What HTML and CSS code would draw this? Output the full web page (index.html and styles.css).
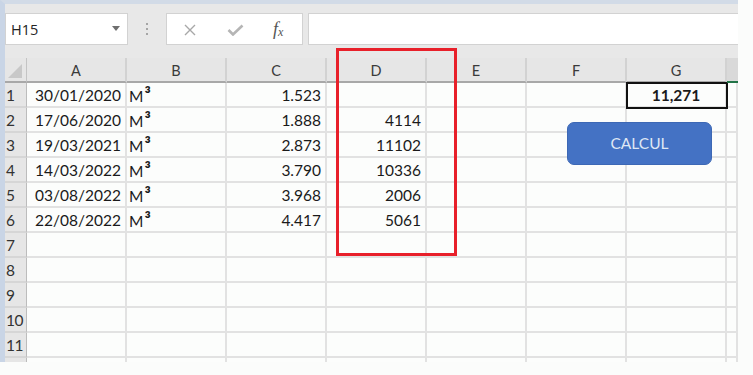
FILE: index.html
```html
<!DOCTYPE html>
<html>
<head>
<meta charset="utf-8">
<link rel="stylesheet" href="styles.css">
</head>
<body>
<div class="app">
  <div class="fbar">
    <div class="namebox"><span class="nb-text">H15</span><span class="caret"></span></div>
    <div class="dots"><span></span><span></span><span></span></div>
    <div class="fbtns">
      <svg class="ico-x" width="14" height="12" viewBox="0 0 14 12"><path d="M2 1 L12 11 M12 1 L2 11" stroke="#a8a8a8" stroke-width="1.4" fill="none"/></svg>
      <svg class="ico-ok" width="17" height="12" viewBox="0 0 17 12"><path d="M1.5 6 L6 10.5 L15.5 1.5" stroke="#b5b5b5" stroke-width="2.6" fill="none"/></svg>
      <span class="fx"><i>f</i><sub>x</sub></span>
    </div>
    <div class="finput"></div>
  </div>
  <div class="sheet">
    <div class="corner"><span class="tri"></span></div>
    <div class="ch">A</div><div class="ch">B</div><div class="ch">C</div><div class="ch">D</div><div class="ch">E</div><div class="ch">F</div><div class="ch">G</div><div class="ch ch-h"></div>

    <div class="rh">1</div><div class="c">30/01/2020</div><div class="c l">M<span class="cube">³</span></div><div class="c">1.523</div><div class="c"></div><div class="c"></div><div class="c"></div><div class="c ctr b">11,271</div><div class="c"></div>
    <div class="rh">2</div><div class="c">17/06/2020</div><div class="c l">M<span class="cube">³</span></div><div class="c">1.888</div><div class="c">4114</div><div class="c"></div><div class="c"></div><div class="c"></div><div class="c"></div>
    <div class="rh">3</div><div class="c">19/03/2021</div><div class="c l">M<span class="cube">³</span></div><div class="c">2.873</div><div class="c">11102</div><div class="c"></div><div class="c"></div><div class="c"></div><div class="c"></div>
    <div class="rh">4</div><div class="c">14/03/2022</div><div class="c l">M<span class="cube">³</span></div><div class="c">3.790</div><div class="c">10336</div><div class="c"></div><div class="c"></div><div class="c"></div><div class="c"></div>
    <div class="rh">5</div><div class="c">03/08/2022</div><div class="c l">M<span class="cube">³</span></div><div class="c">3.968</div><div class="c">2006</div><div class="c"></div><div class="c"></div><div class="c"></div><div class="c"></div>
    <div class="rh">6</div><div class="c">22/08/2022</div><div class="c l">M<span class="cube">³</span></div><div class="c">4.417</div><div class="c">5061</div><div class="c"></div><div class="c"></div><div class="c"></div><div class="c"></div>
    <div class="rh">7</div><div class="c"></div><div class="c"></div><div class="c"></div><div class="c"></div><div class="c"></div><div class="c"></div><div class="c"></div><div class="c"></div>
    <div class="rh">8</div><div class="c"></div><div class="c"></div><div class="c"></div><div class="c"></div><div class="c"></div><div class="c"></div><div class="c"></div><div class="c"></div>
    <div class="rh">9</div><div class="c"></div><div class="c"></div><div class="c"></div><div class="c"></div><div class="c"></div><div class="c"></div><div class="c"></div><div class="c"></div>
    <div class="rh">10</div><div class="c"></div><div class="c"></div><div class="c"></div><div class="c"></div><div class="c"></div><div class="c"></div><div class="c"></div><div class="c"></div>
    <div class="rh">11</div><div class="c"></div><div class="c"></div><div class="c"></div><div class="c"></div><div class="c"></div><div class="c"></div><div class="c"></div><div class="c"></div>
    <div class="rh t"></div><div class="c t"></div><div class="c t"></div><div class="c t"></div><div class="c t"></div><div class="c t"></div><div class="c t"></div><div class="c t"></div><div class="c t"></div>

    <div class="sel-box"></div>
    <div class="sel-green"></div>
    <div class="red-box"></div>
    <div class="btn">CALCUL</div>
  </div>
</div>
</body>
</html>
```

FILE: styles.css
```css
* { box-sizing: border-box; }
html, body { margin: 0; padding: 0; }
body {
  background: #fbfcfb;
  width: 753px;
  height: 375px;
  overflow: hidden;
  font-family: Lato, "Liberation Sans", sans-serif;
}
.app {
  width: 738px;
  border-left: 5px solid #c9d5e6;
  border-top: 4px solid #d2dbe7;
}
.fbar {
  height: 54px;
  background: #e8e8e8;
  display: flex;
  align-items: flex-start;
  padding-top: 9px;
}
.namebox {
  width: 123px;
  height: 32px;
  background: #fff;
  border: 1px solid #d2d2d2;
  display: flex;
  align-items: center;
  padding-left: 5px;
  position: relative;
}
.nb-text {
  font-family: "Open Sans", sans-serif;
  font-size: 14.5px;
  color: #222;
}
.caret {
  position: absolute;
  left: 106px;
  top: 12px;
  width: 0; height: 0;
  border-left: 4px solid transparent;
  border-right: 4px solid transparent;
  border-top: 5px solid #6f6f6f;
}
.dots {
  width: 38px;
  height: 32px;
  display: flex;
  flex-direction: column;
  align-items: center;
  justify-content: center;
  gap: 3px;
}
.dots span { width: 2px; height: 2px; background: #a5a5a5; }
.fbtns {
  width: 137px;
  height: 32px;
  background: #fff;
  border: 1px solid #d2d2d2;
  display: flex;
  align-items: center;
  padding-left: 16px;
}
.ico-x { margin-right: 30px; margin-top: 2px; }
.ico-ok { margin-right: 29px; margin-top: 2px; }
.fx {
  font-family: "Liberation Serif", serif;
  font-size: 18px;
  color: #555;
  font-style: italic;
}
.fx sub { font-size: 12px; vertical-align: -1px; }
.finput {
  margin-left: 5px;
  width: 430px;
  height: 32px;
  background: #fff;
  border: 1px solid #d2d2d2;
  border-right: none;
}
.sheet {
  position: relative;
  display: grid;
  grid-template-columns: 22px repeat(7, 100px) 11px;
  grid-template-rows: 25px repeat(11, 25px) 4px;
  background: #fcfdfc;
}
.corner {
  background: #e6e6e6;
  border-right: 1px solid #c4c4c4;
  border-bottom: 2px solid #a8a8a8;
  position: relative;
}
.tri {
  position: absolute;
  right: 4px;
  bottom: 3px;
  width: 0; height: 0;
  border-left: 14px solid transparent;
  border-bottom: 14px solid #c8c8c8;
}
.ch {
  background: #e6e6e6;
  border-right: 2px solid #d2d2d2;
  border-bottom: 2px solid #a8a8a8;
  font-size: 14.5px;
  color: #3a3a3a;
  display: flex;
  align-items: center;
  justify-content: center;
  padding-top: 1px;
}
.ch-h { background: #d9d9d9; border-right: none; }
.rh {
  background: #e6e6e6;
  border-right: 1px solid #bcbcbc;
  border-bottom: 2px solid #d6d6d6;
  font-size: 15.5px;
  color: #333;
  line-height: 24px;
  padding-left: 1px;
  letter-spacing: -0.5px;
  white-space: nowrap;
}
.c {
  border-right: 2px solid #e2e2e2;
  border-bottom: 2px solid #e2e2e2;
  font-size: 15.5px;
  color: #1a1a1a;
  line-height: 24px;
  padding: 0 4px 0 4px;
  text-align: right;
  white-space: nowrap;
}
.c.l { text-align: left; padding-left: 2px; }
.c.ctr { text-align: center; }
.c.b { font-weight: bold; }
.cube { font-size: 19px; font-weight: bold; margin-left: 1px; }
.t { border-bottom: none; }
.sel-box {
  position: absolute;
  left: 621px;
  top: 24px;
  width: 102px;
  height: 27px;
  border: 2px solid #111;
}
.sel-green {
  position: absolute;
  left: 722px;
  top: 23px;
  width: 11px;
  height: 2px;
  background: #217346;
}
.red-box {
  position: absolute;
  left: 331px;
  top: -10px;
  width: 121px;
  height: 208px;
  border: 3px solid #e8202a;
}
.btn {
  position: absolute;
  left: 562px;
  top: 64px;
  width: 145px;
  height: 43px;
  border-radius: 7px;
  background: #4472c4;
  border: 1px solid #3d68b5;
  color: #dfe7f4;
  font-size: 15.5px;
  display: flex;
  align-items: center;
  justify-content: center;
  padding-bottom: 1px;
}
```
